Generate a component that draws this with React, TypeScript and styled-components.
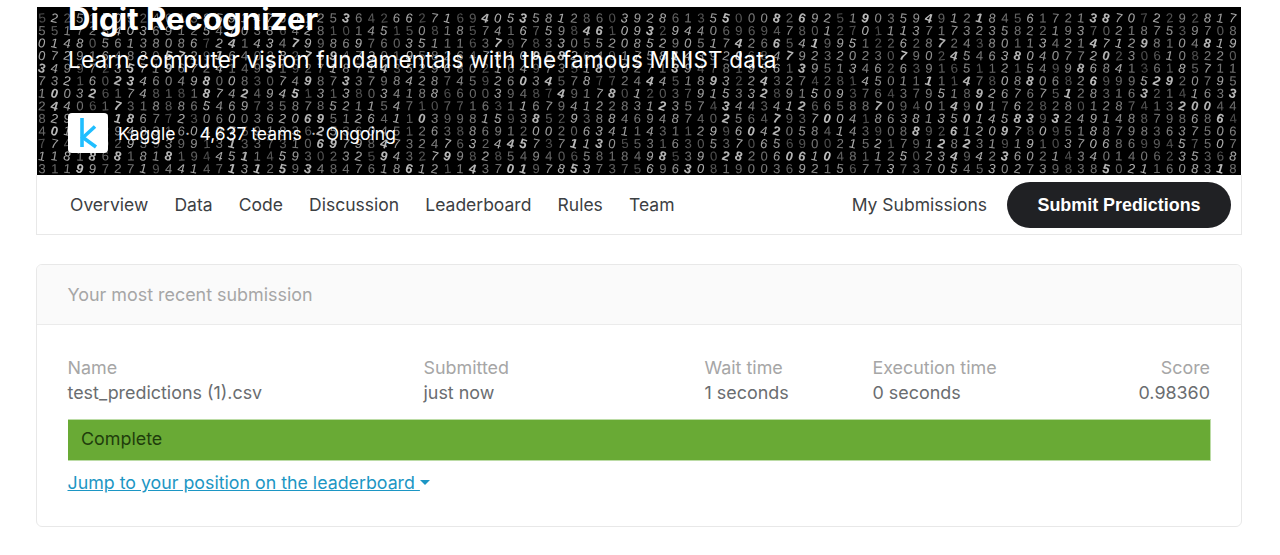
import React from 'react';
import styled, { createGlobalStyle } from 'styled-components';

const DIGIT_ROWS = [
  '52251709246138591476012536426627169405358128603928613550008269251903594912184561721387072292817',
  '55172840369125470386428101451508185741675984610932944069694780127011137173235822193702187539708',
  '01480561380867241434799869760351116379783305520852905174266541995122628724380113421471298104819',
  '07291648305729164038275947301958264731095826401758143920684792320230790245463804077202306108220',
  '34997235719672414931927187143529680216497351860271394781936139513462639165112154998684136185711',
  '73216023460498008307498733798428745926034578772444518932243274281450111114780880682699952920795',
  '10032617481818742494513138034188660039487491780120379153328915093764379518926767512831632141633',
  '24406173188865469735878521154710771631167941228312357434434126658870940149017628280128741320044',
  '82940118677230600362069512641103998159385293884694874025647937004186381350145839324914887986864',
  '40157294831604275918362536045126388691200206341143112996042058414390889261209780951887983637506',
  '77416029393991313373106979847324763244573711305531630537065690021521791282319191037068699457507',
  '11818681818194451145930232594327998285494065818498539028206061048112502349423602143401406235368',
  '31199727194414713125934847618612114370197853737569630819003692156773737054530273983850211608318',
];

const COLUMN_PITCH = 12.67;
const ROW_PITCH = 12.55;

// small repeatable hash so the texture stays the same on every render
const noise = (row: number, col: number) => {
  const v = Math.sin(row * 127.1 + col * 311.7) * 43758.5453;
  return v - Math.floor(v);
};

const GlobalStyle = createGlobalStyle`
  html, body {
    margin: 0;
    padding: 0;
    background: #fff;
  }
  body {
    font-family: Inter, "Noto Sans", sans-serif;
  }
`;

const Page = styled.div`
  width: 1206px;
  margin-left: 36px;
  padding-top: 7px;
`;

const Banner = styled.header`
  position: relative;
  height: 168px;
  margin: 0 1px;
  background: #000;
  overflow: hidden;
`;

const DigitTexture = styled.svg`
  position: absolute;
  inset: 0;
  width: 100%;
  height: 100%;
  filter: blur(0.4px);
`;

const BannerContent = styled.div`
  position: relative;
  display: flex;
  flex-direction: column;
  height: 100%;
  padding-left: 31px;
  box-sizing: border-box;
  color: #fff;
`;

const Title = styled.h1`
  margin: -6px 0 0;
  font-size: 31.2px;
  line-height: 36px;
  font-weight: 700;
`;

const Subtitle = styled.p`
  margin: 8px 0 0;
  font-size: 22.5px;
  line-height: 30px;
  letter-spacing: 0.2px;
`;

const MetaRow = styled.div`
  display: flex;
  align-items: center;
  margin-top: 38px;
  font-size: 17.5px;
`;

const Logo = styled.div`
  width: 40px;
  height: 40px;
  margin-right: 10px;
  border-radius: 4px;
  background: #fff;
`;

const MetaText = styled.span`
  white-space: nowrap;
`;

const MetaDot = styled.span`
  width: 24px;
  text-align: center;
  color: #bbb;
`;

const Nav = styled.nav`
  display: flex;
  align-items: center;
  height: 59px;
  padding: 0 10px 0 33px;
  background: #fff;
  border: 1px solid #e8e8e8;
  border-top: 0;
`;

const Tabs = styled.div`
  display: flex;
  gap: 26.2px;
  flex: 1;
`;

const Tab = styled.a`
  font-size: 17.5px;
  color: #3c4043;
`;

const MySubmissions = styled.a`
  margin-right: 20px;
  font-size: 17.5px;
  color: #3c4043;
`;

const SubmitButton = styled.button`
  width: 224px;
  height: 46px;
  padding: 1px 0 0;
  border: 0;
  border-radius: 23px;
  background: #202124;
  color: #fff;
  font-family: "Liberation Sans", Arial, sans-serif;
  font-size: 17.9px;
  font-weight: 700;
`;

const Card = styled.section`
  margin-top: 29px;
  height: 263px;
  box-sizing: border-box;
  border: 1px solid #e8e8e8;
  border-radius: 6px;
  overflow: hidden;
`;

const CardHeader = styled.div`
  display: flex;
  align-items: center;
  height: 59px;
  padding-left: 30.5px;
  background: #fafafa;
  border-bottom: 1px solid #ebebeb;
  font-size: 17.9px;
  color: #a6a6a6;
`;

const CardBody = styled.div`
  padding: 30px 31px 0 30.5px;
`;

const ResultGrid = styled.div`
  display: grid;
  grid-template-columns: 356px 281px 168px 1fr auto;
  font-size: 17.9px;
  line-height: 25px;
`;

const Label = styled.div<{ $right?: boolean }>`
  color: #a6a6a6;
  text-align: ${({ $right }) => ($right ? 'right' : 'left')};
`;

const Value = styled.div<{ $right?: boolean }>`
  color: #6a6d70;
  text-align: ${({ $right }) => ($right ? 'right' : 'left')};
`;

const StatusBar = styled.div`
  display: flex;
  align-items: center;
  height: 42px;
  margin: 14px -1px 0 0;
  padding: 0 0 3px 13.5px;
  box-sizing: border-box;
  background: #69aa35;
  border: 1px solid #bcdca6;
  border-left-width: 0;
  font-size: 17.9px;
  color: #1f3d0c;
`;

const JumpRow = styled.div`
  display: flex;
  align-items: center;
  margin-top: 9px;
  line-height: 25px;
`;

const JumpLink = styled.a`
  font-size: 17.8px;
  color: #1c96c4;
  text-decoration: underline;
  white-space: pre;
`;

const Caret = styled.span`
  width: 0;
  height: 0;
  border-left: 5px solid transparent;
  border-right: 5px solid transparent;
  border-top: 5px solid #1c96c4;
`;

const App: React.FC = () => {
  return (
    <>
      <GlobalStyle />
      <Page>
        <Banner>
          <DigitTexture viewBox="0 0 1204 168" preserveAspectRatio="none">
            {DIGIT_ROWS.map((row, r) =>
              row.split('').map((digit, c) => {
                const n = noise(r, c);
                const x = 5 + c * COLUMN_PITCH;
                const y = 15.5 + r * ROW_PITCH;
                return (
                  <text
                    key={`${r}-${c}`}
                    x={x}
                    y={y}
                    fill="#fff"
                    fillOpacity={0.3 + n * 0.45}
                    fontFamily="'Liberation Sans', sans-serif"
                    fontSize="13"
                    fontWeight={n > 0.88 ? 700 : 400}
                    textAnchor="middle"
                    transform={`rotate(${(n - 0.25) * 24} ${x} ${y - 5})`}
                  >
                    {digit}
                  </text>
                );
              })
            )}
          </DigitTexture>
          <BannerContent>
            <Title>Digit Recognizer</Title>
            <Subtitle>Learn computer vision fundamentals with the famous MNIST data</Subtitle>
            <MetaRow>
              <Logo>
                <svg width="40" height="40" viewBox="0 0 40 40" fill="none" stroke="#20beff" strokeWidth="3.6">
                  <path d="M14 5V34" />
                  <path d="M27 13.5 15 24.5 28 34" />
                </svg>
              </Logo>
              <MetaText>Kaggle</MetaText>
              <MetaDot>·</MetaDot>
              <MetaText>4,637 teams</MetaText>
              <MetaDot>·</MetaDot>
              <MetaText>Ongoing</MetaText>
            </MetaRow>
          </BannerContent>
        </Banner>
        <Nav>
          <Tabs>
            <Tab>Overview</Tab>
            <Tab>Data</Tab>
            <Tab>Code</Tab>
            <Tab>Discussion</Tab>
            <Tab>Leaderboard</Tab>
            <Tab>Rules</Tab>
            <Tab>Team</Tab>
          </Tabs>
          <MySubmissions>My Submissions</MySubmissions>
          <SubmitButton>Submit Predictions</SubmitButton>
        </Nav>
        <Card>
          <CardHeader>Your most recent submission</CardHeader>
          <CardBody>
            <ResultGrid>
              <Label>Name</Label>
              <Label>Submitted</Label>
              <Label>Wait time</Label>
              <Label>Execution time</Label>
              <Label $right>Score</Label>
              <Value>test_predictions (1).csv</Value>
              <Value>just now</Value>
              <Value>1 seconds</Value>
              <Value>0 seconds</Value>
              <Value $right>0.98360</Value>
            </ResultGrid>
            <StatusBar>Complete</StatusBar>
            <JumpRow>
              <JumpLink>Jump to your position on the leaderboard </JumpLink>
              <Caret />
            </JumpRow>
          </CardBody>
        </Card>
      </Page>
    </>
  );
};

export default App;
